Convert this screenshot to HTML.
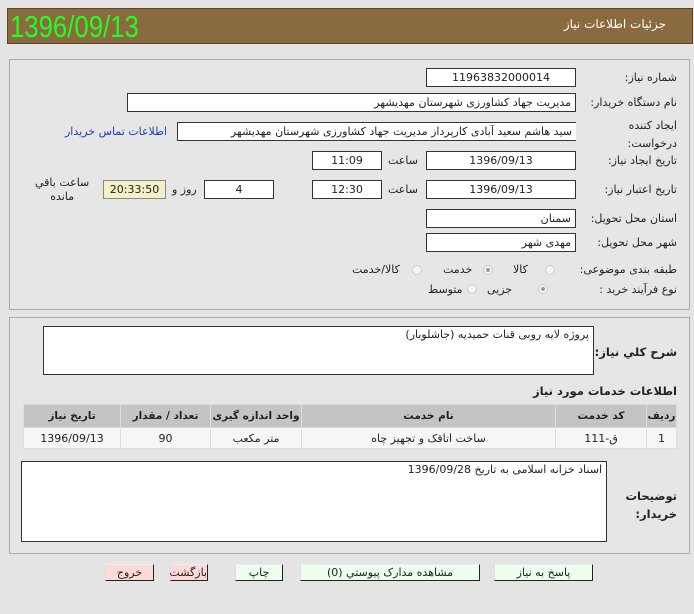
<!DOCTYPE html>
<html><head><meta charset="utf-8"><style>
*{box-sizing:border-box;margin:0;padding:0}
body{width:694px;height:614px;background:#e4e4e4;font-family:"DejaVu Sans","Liberation Sans",sans-serif;font-size:11px;color:#222;position:relative;overflow:hidden}
.a{position:absolute}
.hdr{left:7px;top:8px;width:686px;height:36px;background:#8a6a3f;border:1px solid #5a4526}
.date{left:10px;top:9px;font-family:"Liberation Sans Narrow","Liberation Sans",sans-serif;font-size:31px;color:#20ff20;transform:scaleX(.83);transform-origin:left}
.ttl{right:28px;top:17px;color:#fff;font-size:12px;direction:rtl}
.panel{border:1px solid #aaa;background:#e6e6e6}
.in{background:#fff;border:1px solid #333;height:19px;line-height:17px;direction:rtl;padding:0 4px;white-space:nowrap;overflow:hidden}
.c{text-align:center}
.lb{direction:rtl;white-space:nowrap}
.rd{width:10px;height:10px;border-radius:50%;border:1px solid #ccc;background:#f4f4f4}
.rd.on::after{content:"";position:absolute;left:2px;top:2px;width:4px;height:4px;border-radius:50%;background:#999}
table{border-collapse:collapse;position:absolute;left:23px;top:404px;width:654px;background:#fff;border:1px solid #ccc;table-layout:fixed}
td,th{border:1px solid #ddd;text-align:center;direction:rtl;white-space:nowrap;overflow:hidden}
th{background:#c4c4c4;height:23px;font-size:10.5px}
td{background:#f6f6f6;height:21px}
.btn{top:564px;height:17px;border:1px solid #777;border-right-color:#222;border-bottom-color:#222;border-left-color:#ddd;border-top-color:#eee;text-align:center;line-height:15px;direction:rtl;background:#eefeee}
.pk{background:#ffd8d8}
</style></head><body>
<div class="a hdr"></div>
<div class="a date">1396/09/13</div>
<div class="a ttl">جزئیات اطلاعات نیاز</div>

<div class="a panel" style="left:9px;top:59px;width:681px;height:251px"></div>
<div class="a lb" style="right:17px;top:71px">شماره نیاز:</div>
<div class="a in c" style="left:426px;top:68px;width:150px">1196383200001‌4</div>
<div class="a lb" style="right:17px;top:96px">نام دستگاه خریدار:</div>
<div class="a in" style="left:127px;top:93px;width:449px">مدیریت جهاد کشاورزی شهرستان مهدیشهر</div>
<div class="a lb" style="right:17px;top:117px;line-height:18px;text-align:right">ایجاد کننده<br>درخواست:</div>
<div class="a in" style="left:177px;top:122px;width:399px;border-right:none">سید هاشم سعید آبادی کارپرداز مدیریت جهاد کشاورزی شهرستان مهدیشهر</div>
<div class="a lb" style="left:65px;top:125px;color:#1a3fb0">اطلاعات تماس خریدار</div>
<div class="a lb" style="right:17px;top:154px">تاریخ ایجاد نیاز:</div>
<div class="a in c" style="left:426px;top:151px;width:150px">1396/09/13</div>
<div class="a lb" style="left:388px;top:154px">ساعت</div>
<div class="a in c" style="left:312px;top:151px;width:70px">11:09</div>
<div class="a lb" style="right:17px;top:183px">تاریخ اعتبار نیاز:</div>
<div class="a in c" style="left:426px;top:180px;width:150px">1396/09/13</div>
<div class="a lb" style="left:388px;top:183px">ساعت</div>
<div class="a in c" style="left:312px;top:180px;width:70px">12:30</div>
<div class="a in c" style="left:204px;top:180px;width:70px">4</div>
<div class="a lb" style="left:172px;top:183px">روز و</div>
<div class="a in c" style="left:103px;top:180px;width:63px;background:#f4f0c8;border-color:#888">20:33:50</div>
<div class="a lb" style="left:35px;top:176px;line-height:14px;text-align:center">ساعت باقي<br>مانده</div>
<div class="a lb" style="right:17px;top:212px">استان محل تحویل:</div>
<div class="a in" style="left:426px;top:209px;width:150px">سمنان</div>
<div class="a lb" style="right:17px;top:236px">شهر محل تحویل:</div>
<div class="a in" style="left:426px;top:233px;width:150px">مهدی شهر</div>
<div class="a lb" style="right:17px;top:263px">طبقه بندی موضوعی:</div>
<div class="a rd" style="left:545px;top:265px"></div><div class="a lb" style="left:513px;top:263px">کالا</div>
<div class="a rd on" style="left:483px;top:265px"></div><div class="a lb" style="left:443px;top:263px">خدمت</div>
<div class="a rd" style="left:412px;top:265px"></div><div class="a lb" style="left:352px;top:263px">کالا/خدمت</div>
<div class="a lb" style="right:17px;top:283px">نوع فرآیند خرید :</div>
<div class="a rd on" style="left:538px;top:284px"></div><div class="a lb" style="left:487px;top:283px">جزیی</div>
<div class="a rd" style="left:467px;top:284px"></div><div class="a lb" style="left:428px;top:283px">متوسط</div>

<div class="a panel" style="left:9px;top:317px;width:681px;height:237px"></div>
<div class="a in" style="left:43px;top:326px;width:551px;height:49px;line-height:16px">پروژه لایه روبی قنات حمیدیه (جاشلوبار)</div>
<div class="a lb" style="right:17px;top:345px;font-weight:bold;font-size:11.5px">شرح کلي نیاز:</div>
<div class="a lb" style="right:17px;top:384px;font-weight:bold;font-size:11.5px">اطلاعات خدمات مورد نیاز</div>
<table>
<colgroup><col style="width:97px"><col style="width:90px"><col style="width:91px"><col><col style="width:91px"><col style="width:30px"></colgroup>
<tr><th>تاریخ نیاز</th><th>تعداد / مقدار</th><th>واحد اندازه گیری</th><th>نام خدمت</th><th>کد خدمت</th><th>ردیف</th></tr>
<tr><td>1396/09/13</td><td>90</td><td>متر مکعب</td><td>ساخت اتاقک و تجهیز چاه</td><td>ق-111</td><td>1</td></tr>
</table>
<div class="a in" style="left:21px;top:461px;width:586px;height:81px;line-height:16px">اسناد خزانه اسلامی به تاریخ 1396/09/28</div>
<div class="a lb" style="right:17px;top:487px;font-weight:bold;font-size:11.5px;line-height:18px;text-align:right">توضیحات<br>خریدار:</div>

<div class="a btn" style="left:494px;width:99px">پاسخ به نیاز</div>
<div class="a btn" style="left:300px;width:180px">مشاهده مدارک پیوستي (0)</div>
<div class="a btn" style="left:235px;width:48px">چاپ</div>
<div class="a btn pk" style="left:170px;width:38px">بازگشت</div>
<div class="a btn pk" style="left:105px;width:49px">خروج</div>
</body></html>
